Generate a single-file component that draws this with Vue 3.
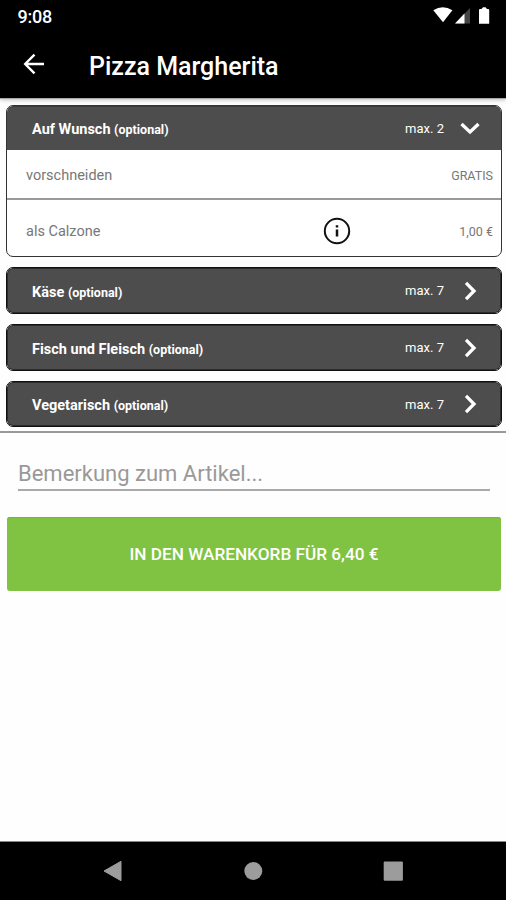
<script setup>
import { ref } from 'vue'

const groups = ref([
  {
    name: 'Auf Wunsch',
    max: 2,
    open: true,
    items: [
      { name: 'vorschneiden', price: 'GRATIS', info: false },
      { name: 'als Calzone', price: '1,00 €', info: true },
    ],
  },
  { name: 'Käse', max: 7, open: false, items: [] },
  { name: 'Fisch und Fleisch', max: 7, open: false, items: [] },
  { name: 'Vegetarisch', max: 7, open: false, items: [] },
])
</script>

<template>
  <div class="screen">
    <header class="top">
      <div class="status">
        <span class="clock">9:08</span>
        <svg class="signals" width="60" height="18" viewBox="0 0 60 18">
          <path d="M0.3 3.2 Q9.8 -2.6 19.4 3.2 L10 15.3 Z" fill="#fff" />
          <path d="M37 1 V16.5 H22 Z" fill="#444" />
          <path d="M31.5 6.6 V16.5 H22 Z" fill="#fff" />
          <path d="M46 3 Q46 2 47 2 H48.5 L50 0.3 H52.5 L54 2 H55.2 Q56.2 2 56.2 3 V16.8 H46 Z" fill="#fff" />
        </svg>
      </div>
      <div class="bar">
        <svg class="back" width="22" height="22" viewBox="0 0 22 22">
          <path d="M21 11 H2.5 M11.5 1.7 L2.2 11 L11.5 20.3" fill="none" stroke="#fff" stroke-width="2.4" />
        </svg>
        <h1 class="title">Pizza Margherita</h1>
      </div>
    </header>

    <main class="content">
      <section class="groups">
        <article v-for="g in groups" :key="g.name" class="group" :class="{ open: g.open }">
          <div class="head">
            <span class="name">{{ g.name }} <span class="opt">(optional)</span></span>
            <span class="max">max. {{ g.max }}</span>
            <svg class="chevron" width="22" height="22" viewBox="0 0 22 22">
              <path :d="g.open ? 'M2.5 7 L11 15 L19.5 7' : 'M7 2.8 L15 11 L7 19.2'" fill="none" stroke="#fff" stroke-width="3.3" />
            </svg>
          </div>
          <div v-for="item in g.items" :key="item.name" class="item">
            <span class="item-name">{{ item.name }}</span>
            <svg v-if="item.info" class="info" width="28" height="28" viewBox="0 0 28 28">
              <circle cx="14" cy="14" r="12.2" fill="none" stroke="#111" stroke-width="2" />
              <path d="M14 8.3 V10.6 M14 12.6 V19.6" stroke="#111" stroke-width="2.5" />
            </svg>
            <span class="price">{{ item.price }}</span>
          </div>
        </article>
      </section>

      <section class="order">
        <input class="note" type="text" placeholder="Bemerkung zum Artikel..." />
        <button class="add" type="button">IN DEN WARENKORB FÜR 6,40 €</button>
      </section>
    </main>

    <nav class="nav">
      <svg width="20" height="22" viewBox="0 0 20 22"><path d="M1 11 L18 1.3 V20.7 Z" fill="#9c9c9c" stroke="#9c9c9c" stroke-linejoin="round" /></svg>
      <svg width="20" height="22" viewBox="0 0 20 22"><circle cx="10.3" cy="11" r="9" fill="#9c9c9c" /></svg>
      <svg width="20" height="22" viewBox="0 0 20 22"><rect x="0.7" y="1.5" width="19.2" height="19.2" rx="1" fill="#9c9c9c" /></svg>
    </nav>
  </div>
</template>

<style>
body {
  margin: 0;
  background: #fff;
}
</style>

<style scoped>
.screen {
  width: 506px;
  height: 900px;
  display: flex;
  flex-direction: column;
  font-family: Roboto, sans-serif;
  background: #fefefe;
  overflow: hidden;
}
.top {
  flex: none;
  height: 98px;
  background: #000;
  color: #fff;
  box-shadow: 0 1px 0 #aaa, 0 2px 4px rgba(0, 0, 0, 0.25);
}
.status {
  height: 32px;
  display: flex;
  align-items: center;
  justify-content: space-between;
  padding: 0 13px 0 17.5px;
}
.clock {
  font-size: 18px;
  font-weight: 500;
  letter-spacing: -0.2px;
}
.signals {
  margin-top: -1px;
}
.bar {
  display: flex;
  align-items: center;
  height: 66px;
  padding-left: 23px;
  gap: 44px;
}
.back {
  margin-top: -2px;
}
.title {
  margin: 3px 0 0;
  font-size: 25px;
  font-weight: 500;
  line-height: 30px;
}
.content {
  flex: 1;
}
.groups {
  display: flex;
  flex-direction: column;
  gap: 10px;
  padding: 7px 4px 4px 6px;
  border-bottom: 2px solid #999;
}
.group {
  border: 1px solid #111;
  border-radius: 7px;
  overflow: hidden;
  background: #fff;
}
.group.open {
  border-color: #333;
}
.group:last-child .head {
  height: 44px;
}
.head {
  display: flex;
  align-items: center;
  height: 45px;
  box-sizing: border-box;
  padding: 0 20px 0 25px;
  background: #4d4d4d;
  border-radius: 6px;
  box-shadow: inset 0 0 0 1px #2c2c2c;
  color: #fff;
}
.group.open .head {
  height: 44px;
  border-radius: 6px 6px 0 0;
  box-shadow: inset 0 1px 0 #3c3c3c;
}
.name {
  flex: 1;
  margin-top: 3px;
  font-size: 14.5px;
  font-weight: 700;
}
.opt {
  font-size: 12.5px;
}
.max {
  font-size: 13px;
  margin-right: 15px;
}
.item {
  display: flex;
  align-items: center;
  height: 48px;
  box-sizing: border-box;
  padding: 2px 8px 0 19px;
  color: #777;
}
.item + .item {
  height: 58px;
  padding-top: 7px;
  border-top: 2px solid #999;
}
.item-name {
  flex: 1;
  font-size: 14.5px;
}
.info {
  margin: -2px 108px 0 0;
}
.price {
  font-size: 12.5px;
}
.order {
  display: flex;
  flex-direction: column;
  padding: 17px 5px 0 7px;
}
.note {
  height: 41px;
  box-sizing: border-box;
  margin: 0 11px 0 11px;
  padding: 8px 0 0 0;
  border: 0;
  border-bottom: 2px solid #aaa;
  outline: 0;
  background: transparent;
  font: 400 22px Roboto, sans-serif;
  color: #333;
}
.note::placeholder {
  color: #999;
  opacity: 1;
}
.add {
  height: 74px;
  margin-top: 26px;
  border: 0;
  border-radius: 3px;
  background: #80c342;
  box-shadow: inset 0 1px 0 #76b82f;
  color: #fff;
  font: 500 17.2px Roboto, sans-serif;
}
.nav {
  flex: none;
  display: flex;
  align-items: center;
  justify-content: space-between;
  height: 59px;
  box-sizing: border-box;
  padding: 0 103px;
  border-top: 1px solid #888;
  background: #000;
}
</style>
